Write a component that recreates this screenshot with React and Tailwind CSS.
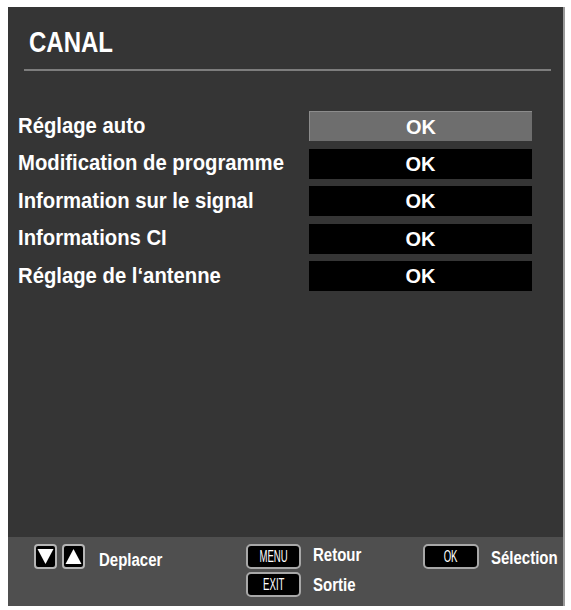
import React from 'react';

const items = [
  { label: 'Réglage auto', active: true },
  { label: 'Modification de programme' },
  { label: 'Information sur le signal' },
  { label: 'Informations CI' },
  { label: 'Réglage de l‘antenne' },
];

const Arrow = ({ up }) => (
  <div className="w-[23px] h-[25px] rounded-[4px] border-2 border-[#b5b5b5] bg-black flex items-center justify-center">
    <svg width="17" height="17" viewBox="0 0 17 17">
      {up ? (
        <polygon points="8.5,1 16.5,16 0.5,16" fill="#fff" />
      ) : (
        <polygon points="0.5,1 16.5,1 8.5,16" fill="#fff" />
      )}
    </svg>
  </div>
);

const Key = ({ children, w = 'w-[55px]' }) => (
  <div className={`${w} h-[25px] rounded-[5px] border-2 border-[#a8a8a8] bg-black flex items-center justify-center`}>
    <span className="inline-block text-[16px] text-white scale-x-[0.6] scale-y-[1.05] leading-none">{children}</span>
  </div>
);

const FootText = ({ children }) => (
  <span className="inline-block text-[15px] font-bold text-white scale-y-[1.2] leading-none">{children}</span>
);

export default function App() {
  return (
    <div className="w-[571px] h-[610px] bg-white pt-[7px] pl-[8px]" style={{ fontFamily: '"Liberation Sans", Arial, sans-serif' }}>
      <div className="w-[557px] h-[599px] bg-[#353535] border-r-2 border-[#9a9a9a] flex flex-col">
        {/* header */}
        <div className="pt-[21px] pl-[21px] h-[28px] box-content">
          <span className="inline-block text-[24px] leading-[28px] font-bold text-white scale-y-[1.2]">CANAL</span>
        </div>
        <div className="mt-[13px] ml-[16px] mr-[12px] h-[2px] bg-[#7d7d7d]" />

        {/* menu rows */}
        <div className="mt-[40px] pl-[10px] flex flex-col gap-[7.5px]">
          {items.map((it) => (
            <div key={it.label} className="flex items-center h-[30px]">
              <div className="w-[291px] text-[20.3px] font-bold text-white leading-none">
                <span className="inline-block scale-y-[1.05] origin-center">{it.label}</span>
              </div>
              <div
                className={`w-[223px] h-full flex items-center justify-center text-[20px] font-bold text-white ${
                  it.active ? 'bg-[#6e6e6e] border-t border-l border-[#8c8c8c]' : 'bg-black'
                }`}
              >
                <span className="inline-block scale-y-[1.05]">OK</span>
              </div>
            </div>
          ))}
        </div>

        {/* footer */}
        <div className="mt-auto h-[69px] bg-[#4f4f4f] flex pt-[7px]">
          <div className="w-[238px] pl-[26px] flex items-start">
            <div className="flex gap-[5px]">
              <Arrow />
              <Arrow up />
            </div>
            <div className="ml-[14px] mt-[4px]">
              <FootText>Deplacer</FootText>
            </div>
          </div>
          <div className="w-[177px] flex flex-col gap-[3px]">
            <div className="flex items-center">
              <Key>MENU</Key>
              <div className="ml-[12px] -mt-[3px]"><FootText>Retour</FootText></div>
            </div>
            <div className="flex items-center">
              <Key>EXIT</Key>
              <div className="ml-[12px]"><FootText>Sortie</FootText></div>
            </div>
          </div>
          <div className="flex items-start">
            <Key w="w-[56px]">OK</Key>
            <div className="ml-[12px] mt-[2px]"><FootText>Sélection</FootText></div>
          </div>
        </div>
      </div>
    </div>
  );
}
